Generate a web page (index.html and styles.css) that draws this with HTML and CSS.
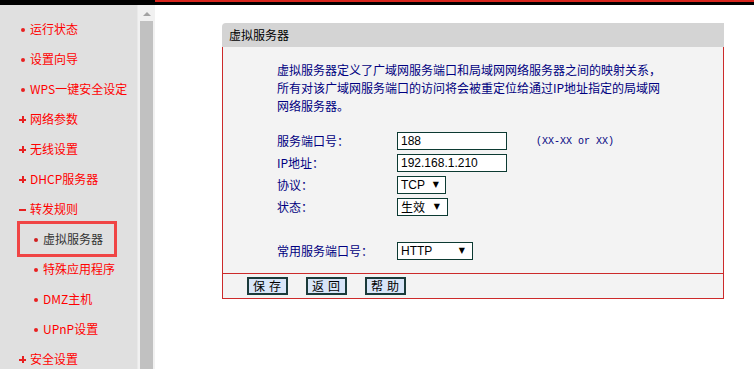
FILE: index.html
```html
<!DOCTYPE html>
<html>
  <head>
    <meta charset="utf-8">
    <title>虚拟服务器</title>
    <link rel="stylesheet" href="styles.css">
  </head>
  <body>
    <div class="topbar">
      <div class="topbar-left"></div>
      <div class="topbar-right"></div>
    </div>
    <div class="frame">
      <div class="sidebar">
        <ul class="menu">
          <li class="item"><span class="mark dot"></span>运行状态</li>
          <li class="item"><span class="mark dot"></span>设置向导</li>
          <li class="item"><span class="mark dot"></span>WPS一键安全设定</li>
          <li class="item"><span class="mark plus"></span>网络参数</li>
          <li class="item"><span class="mark plus"></span>无线设置</li>
          <li class="item"><span class="mark plus"></span>DHCP服务器</li>
          <li class="item"><span class="mark minus"></span>转发规则</li>
          <li class="item sub active"><span class="mark dot"></span>虚拟服务器</li>
          <li class="item sub"><span class="mark dot"></span>特殊应用程序</li>
          <li class="item sub"><span class="mark dot"></span>DMZ主机</li>
          <li class="item sub"><span class="mark dot"></span>UPnP设置</li>
          <li class="item"><span class="mark plus"></span>安全设置</li>
        </ul>
        <div class="scrollbar">
          <div class="scroll-up"></div>
          <div class="scroll-thumb"></div>
        </div>
      </div>

      <div class="main">
        <div class="panel">
          <div class="panel-title">虚拟服务器</div>
          <div class="panel-body">
            <p class="desc">虚拟服务器定义了广域网服务端口和局域网网络服务器之间的映射关系，<br>所有对该广域网服务端口的访问将会被重定位给通过IP地址指定的局域网<br>网络服务器。</p>
            <div class="form">
              <label>服务端口号：</label>
              <div class="field">
                <span class="input">188</span>
                <span class="hint">(XX-XX or XX)</span>
              </div>

              <label>IP地址：</label>
              <div class="field"><span class="input">192.168.1.210</span></div>

              <label>协议：</label>
              <div class="field"><span class="select w-tcp">TCP<span class="arrow">▼</span></span></div>

              <label>状态：</label>
              <div class="field"><span class="select w-state cjk">生效<span class="arrow">▼</span></span></div>

              <div class="spacer"></div>

              <label>常用服务端口号：</label>
              <div class="field"><span class="select w-http">HTTP<span class="arrow">▼</span></span></div>
            </div>
          </div>
          <div class="panel-foot">
            <button class="btn">保存</button>
            <button class="btn">返回</button>
            <button class="btn">帮助</button>
          </div>
        </div>
      </div>
    </div>
  </body>
</html>
```

FILE: styles.css
```css
* {
    box-sizing: border-box;
}
html, body {
    margin: 0;
    padding: 0;
    height: 100%;
    overflow: hidden;
    background: #fff;
    font-family: "Noto Sans CJK SC", "Liberation Sans", sans-serif;
    font-size: 12px;
}

/* top strip */
.topbar {
    display: flex;
    height: 5px;
}
.topbar-left {
    width: 155px;
    background: #000;
}
.topbar-right {
    flex: 1;
    background: #000;
    border-top: 2px solid #d8261e;
}

.frame {
    display: flex;
    height: 364px;
    overflow: hidden;
}

/* left menu */
.sidebar {
    display: flex;
    width: 155px;
    flex-shrink: 0;
    overflow: hidden;
}
.menu {
    list-style: none;
    margin: 0;
    padding: 9px 0 0 0;
    width: 138px;
    background: #e0e0e0;
    border-right: 1px solid #e9e9e9;
}
.item {
    display: flex;
    align-items: center;
    height: 30px;
    line-height: 30px;
    padding-left: 19px;
    color: #f00;
    white-space: nowrap;
}
.item.sub {
    padding-left: 32px;
}
.item.active {
    margin-left: 20px;
    width: 94px;
    padding-left: 12px;
    color: #333;
    outline: 3px solid #f04545;
}
.mark {
    display: inline-block;
    position: relative;
    width: 7px;
    height: 7px;
    margin-right: 4px;
}
.mark.dot::before {
    content: "";
    position: absolute;
    left: 2px;
    top: 2px;
    width: 4px;
    height: 4px;
    border-radius: 2px;
    background: #e82020;
}
.plus::before, .plus::after, .minus::before {
    content: "";
    position: absolute;
    background: #e82020;
}
.plus::before, .minus::before {
    left: 0;
    top: 3px;
    width: 7px;
    height: 2px;
}
.plus::after {
    left: 3px;
    top: 0;
    width: 2px;
    height: 7px;
}
.item.active .mark.dot::before {
    background: #d02020;
}

.scrollbar {
    width: 17px;
    background: #f1f1f1;
    padding: 0 2px;
}
.scroll-up {
    width: 0;
    height: 0;
    margin: 7px auto 5px;
    border-left: 4px solid transparent;
    border-right: 4px solid transparent;
    border-bottom: 4px solid #a3a3a3;
}
.scroll-thumb {
    height: 400px;
    background: #c1c1c1;
}

/* main content */
.main {
    flex: 1;
    padding: 18px 0 0 67px;
}
.panel {
    width: 502px;
}
.panel-title {
    height: 24px;
    line-height: 24px;
    padding-left: 7px;
    background: #d4d4d4;
    border-top-left-radius: 4px;
    color: #000;
}
.panel-body {
    background: #f3f3f3;
    border-left: 1px solid #cc2a2a;
    border-right: 1px solid #cc2a2a;
    padding: 14px 0 11px 54px;
    color: #000080;
}
.desc {
    margin: 0;
    line-height: 18px;
    white-space: nowrap;
}
.form {
    display: grid;
    grid-template-columns: 120px 1fr;
    grid-auto-rows: 22px;
    align-items: center;
    margin-top: 15px;
}
.form label {
    line-height: 22px;
}
.spacer {
    grid-column: 1 / 3;
}
.field {
    display: flex;
    align-items: center;
}
.input, .select {
    display: flex;
    align-items: center;
    height: 18px;
    line-height: 16px;
    border: 1px solid #0c3a32;
    background: #fff;
    color: #000;
    padding-left: 3px;
    font-family: "Liberation Sans", Arial, sans-serif;
    font-size: 12px;
}
.input {
    width: 110px;
}
.hint {
    margin-left: 29px;
    font-family: "Liberation Mono", monospace;
    font-size: 10px;
    color: #000080;
}
.select {
    justify-content: space-between;
    padding-right: 5px;
}
.select.cjk {
    font-family: "Noto Sans CJK SC", sans-serif;
}
.arrow {
    font-size: 8px;
    font-family: "DejaVu Sans", sans-serif;
}
.w-tcp { width: 49px; padding-right: 6px; }
.w-state { width: 51px; padding-right: 7px; }
.w-http { width: 76px; padding-right: 7px; }

.panel-foot {
    display: flex;
    gap: 18px;
    background: #f3f3f3;
    border: 1px solid #cc2a2a;
    padding: 3px 0 3px 24px;
}
.btn {
    width: 41px;
    height: 18px;
    margin: 0;
    padding: 0 0 0 4px;
    border: 2px solid #1a3a3a;
    background: #d8e5f8;
    color: #000;
    font-family: "Noto Sans CJK SC", sans-serif;
    font-size: 12px;
    line-height: 14px;
    letter-spacing: 4px;
    text-align: left;
}
```
